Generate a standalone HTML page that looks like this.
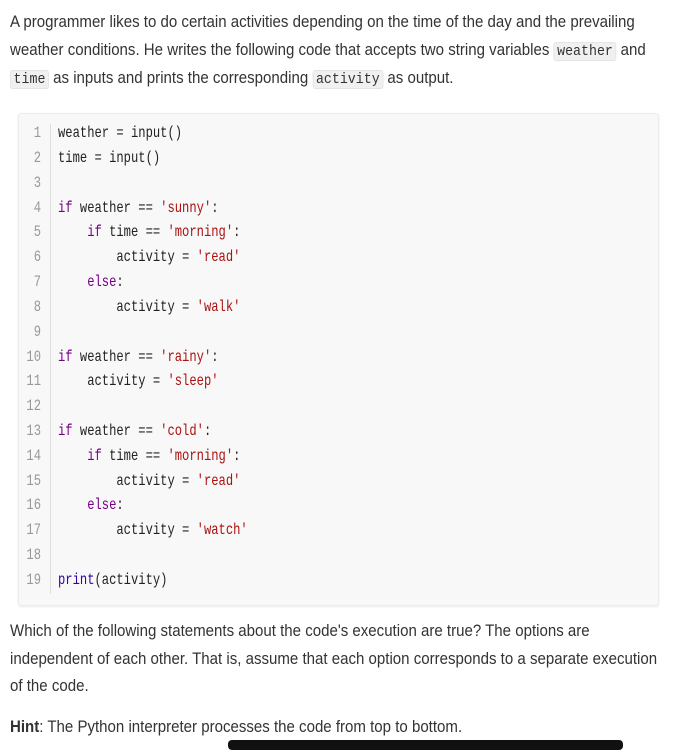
<!DOCTYPE html>
<html><head><meta charset="utf-8"><style>
body{margin:0;width:694px;height:742px;background:#fff;position:relative;overflow:hidden;font-family:"Liberation Sans",sans-serif;color:#333}
.t{position:absolute;left:10px;white-space:nowrap;font-size:17px;transform:scaleX(0.885);transform-origin:left center;line-height:20px}
code{font-family:"Liberation Mono",monospace;font-size:15px;background:#f0f0f0;border:1px solid #e4e4e4;border-radius:3px;padding:0 3px;color:#333}
.box{position:absolute;left:18px;top:113px;width:639px;height:491px;background:#f8f8f8;border:1px solid #ececec;border-radius:3px;box-shadow:0 1px 2px rgba(0,0,0,.08)}
.gut{position:absolute;left:50px;top:124px;width:1px;height:470px;background:#ddd}
.ln{position:absolute;width:41px;left:0;text-align:right;font-family:"Liberation Mono",monospace;font-size:16px;color:#999;transform:scaleX(0.76);transform-origin:right center;line-height:20px}
.c{position:absolute;left:58px;white-space:pre;font-family:"Liberation Mono",monospace;font-size:16px;color:#222;transform:scaleX(0.76);transform-origin:left center;line-height:20px}
.k{color:#708}.s{color:#a11}.b{color:#30a}
</style></head><body>
<div class="t" style="top:12px">A programmer likes to do certain activities depending on the time of the day and the prevailing</div>
<div class="t" style="top:40px">weather conditions. He writes the following code that accepts two string variables <code>weather</code> and</div>
<div class="t" style="top:68px"><code>time</code> as inputs and prints the corresponding <code>activity</code> as output.</div>
<div class="box"></div><div class="gut"></div>
<div class="ln" style="top:123px">1</div><div class="c" style="top:123px">weather = input()</div>
<div class="ln" style="top:148px">2</div><div class="c" style="top:148px">time = input()</div>
<div class="ln" style="top:173px">3</div>
<div class="ln" style="top:198px">4</div><div class="c" style="top:198px"><span class="k">if</span> weather == <span class="s">'sunny'</span>:</div>
<div class="ln" style="top:222px">5</div><div class="c" style="top:222px">    <span class="k">if</span> time == <span class="s">'morning'</span>:</div>
<div class="ln" style="top:247px">6</div><div class="c" style="top:247px">        activity = <span class="s">'read'</span></div>
<div class="ln" style="top:272px">7</div><div class="c" style="top:272px">    <span class="k">else</span>:</div>
<div class="ln" style="top:297px">8</div><div class="c" style="top:297px">        activity = <span class="s">'walk'</span></div>
<div class="ln" style="top:322px">9</div>
<div class="ln" style="top:347px">10</div><div class="c" style="top:347px"><span class="k">if</span> weather == <span class="s">'rainy'</span>:</div>
<div class="ln" style="top:371px">11</div><div class="c" style="top:371px">    activity = <span class="s">'sleep'</span></div>
<div class="ln" style="top:396px">12</div>
<div class="ln" style="top:421px">13</div><div class="c" style="top:421px"><span class="k">if</span> weather == <span class="s">'cold'</span>:</div>
<div class="ln" style="top:446px">14</div><div class="c" style="top:446px">    <span class="k">if</span> time == <span class="s">'morning'</span>:</div>
<div class="ln" style="top:471px">15</div><div class="c" style="top:471px">        activity = <span class="s">'read'</span></div>
<div class="ln" style="top:495px">16</div><div class="c" style="top:495px">    <span class="k">else</span>:</div>
<div class="ln" style="top:520px">17</div><div class="c" style="top:520px">        activity = <span class="s">'watch'</span></div>
<div class="ln" style="top:545px">18</div>
<div class="ln" style="top:570px">19</div><div class="c" style="top:570px"><span class="b">print</span>(activity)</div>
<div class="t" style="top:621px">Which of the following statements about the code's execution are true? The options are</div>
<div class="t" style="top:649px">independent of each other. That is, assume that each option corresponds to a separate execution</div>
<div class="t" style="top:676px">of the code.</div>
<div class="t" style="top:717px"><b>Hint</b>: The Python interpreter processes the code from top to bottom.</div>
<div style="position:absolute;left:228px;top:740px;width:395px;height:10px;background:#111;border-radius:4px"></div>
</body></html>
